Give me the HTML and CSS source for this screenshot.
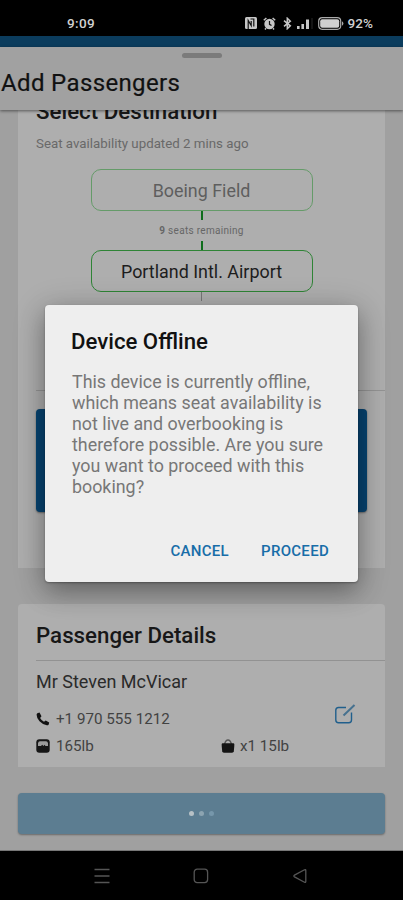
FILE: index.html
```html
<!DOCTYPE html>
<html lang="en">
<head>
<meta charset="utf-8">
<title>Add Passengers</title>
<link rel="stylesheet" href="styles.css">
</head>
<body>
<div class="screen">
  <header class="status">
    <span class="clock">9:09</span>
    <div class="status-icons">
      <svg class="nfc" width="12" height="12" viewBox="0 0 12 12"><rect width="12" height="12" rx="1.5" fill="#c6c6c6"/><path d="M3.200 12V3.500l3 5V4M5.500 2h3.300v7.500" fill="none" stroke="#111" stroke-width="1.200"/></svg>
      <svg class="alarm" width="13" height="13" viewBox="0 0 13 13"><circle cx="6.5" cy="7" r="5.2" fill="#c6c6c6"/><path d="M.8 3.2 3.4 1M12.2 3.2 9.6 1M3 11.3l-1 1.2M10 11.3l1 1.2" stroke="#c6c6c6" stroke-width="1.5"/><path d="M6.5 4v3.3l2 1.2" fill="none" stroke="#111" stroke-width="1.2"/></svg>
      <svg class="bluetooth" width="9" height="13" viewBox="0 0 9 13"><path d="m1 3.7 6.3 5.2-3 2.8V1.3l3 2.8L1 9.3" fill="none" stroke="#c6c6c6" stroke-width="1.5"/></svg>
      <svg class="signal" width="16" height="11" viewBox="0 0 16 11"><path d="M0 8h2.6v3H0zM4.4 6H7v5H4.4zM9 1.500h3V11H9z" fill="#c6c6c6"/><path d="M14.500 0h1v11h-1z" fill="#292929"/></svg>
      <svg class="battery" width="26" height="13" viewBox="0 0 26 13"><rect x=".7" y=".7" width="22" height="11.600" rx="3.500" fill="none" stroke="#aaa" stroke-width="1.200"/><rect x="2.200" y="2.200" width="19" height="8.600" rx="2" fill="#d0d0d0"/><path d="M24 4.200q1.400.8 1.400 2.300T24 8.800z" fill="#aaa"/></svg>
      <span class="percent">92%</span>
    </div>
  </header>
  <div class="appbar"></div>
  <section class="sheet-head">
    <div class="grabber"></div>
    <h1>Add Passengers</h1>
  </section>
  <main class="content">
    <section class="card destination">
      <h2>Select Destination</h2>
      <p class="updated">Seat availability updated 2 mins ago</p>
      <div class="route">
        <div class="stop faded"><span>Boeing Field</span></div>
        <i class="link"></i>
        <p class="seats"><b>9</b> seats remaining</p>
        <i class="link"></i>
        <div class="stop"><span>Portland Intl. Airport</span></div>
        <i class="link muted"></i>
      </div>
      <hr class="rule">
      <div class="panel"></div>
    </section>
    <section class="card passenger">
      <h2>Passenger Details</h2>
      <p class="name">Mr Steven McVicar</p>
      <div class="details">
        <div class="detail phone"><svg width="14" height="14" viewBox="0 0 14 14"><path d="M1.300 1.200 3.500.6 5.500 4.300 4.100 5.900q1.400 2.600 3.900 3.900l1.700-1.400 3.500 2.100-.6 2.200q-.6.700-1.800.6Q6.500 12.500 3.500 9.300.7 6.300.6 2.700.6 1.800 1.300 1.200z" fill="#121212"/></svg><span>+1 970 555 1212</span></div>
        <svg class="edit" width="22" height="22" viewBox="0 0 22 22" fill="none" stroke="#205f8c"><path d="M12 3.500H4.500q-2.700 0-2.700 2.700v9.800q0 2.700 2.700 2.700h10.300q2.700 0 2.700-2.700V8.500" stroke-width="1.400"/><path d="M9.500 11.500 20.500 1" stroke="#46718f" stroke-width="2"/></svg>
        <div class="detail weight"><svg width="14" height="14" viewBox="0 0 14 14"><rect x=".3" y=".3" width="13.400" height="13.400" rx="3" fill="#161616"/><path d="M2 7V4.200Q2.300 2.400 4 2.200h6q1.700.2 2 2V7H9.500L8.500 5.800 7.500 7 6.200 5.800 5 7z" fill="#9b9b9b"/></svg><span>165lb</span></div>
        <div class="detail bag"><svg width="14" height="14" viewBox="0 0 14 14"><path d="M3.500 5.500Q4.500 1 7 1T10.500 5.500" fill="none" stroke="#555" stroke-width="1.300"/><path d="M1.700 4.200h10.600q1 0 1 1.200v1.600l-.5 5.300q-.2 1.400-1.700 1.400H2.900q-1.500 0-1.700-1.400L.7 7V5.400q0-1.200 1-1.200z" fill="#141414"/></svg><span>x1 15lb</span></div>
      </div>
    </section>
    <div class="submit"><i></i><i></i><i></i></div>
  </main>
  <nav class="nav">
    <svg width="16" height="16" viewBox="0 0 16 16" stroke="#555" stroke-width="1.300"><path d="M.5 1.500h15M.5 8h15M.5 14.500h15"/></svg>
    <svg width="16" height="16" viewBox="0 0 16 16"><rect x="1.200" y="1.200" width="13.400" height="13.400" rx="3" fill="none" stroke="#555" stroke-width="1.300"/></svg>
    <svg width="16" height="16" viewBox="0 0 16 16"><path d="M13.800 2.500v11q0 1.300-1.300.7L2.500 8.900q-1.300-.9 0-1.800l10-5.300q1.300-.6 1.300.7z" fill="none" stroke="#555" stroke-width="1.300"/></svg>
  </nav>
  <div class="dialog" role="dialog">
    <h3>Device Offline</h3>
    <p>This device is currently offline,<br>which means seat availability is<br>not live and overbooking is<br>therefore possible. Are you sure<br>you want to proceed with this<br>booking?</p>
    <div class="actions"><button class="cancel">CANCEL</button><button class="proceed">PROCEED</button></div>
  </div>
</div>
</body>
</html>
```
FILE: styles.css
```css
* { box-sizing: border-box; }
body, h1, h2, h3, p { margin: 0; }
body { font-family: Roboto, "Liberation Sans", sans-serif; background: #000; }
svg { display: block; flex: none; }
.screen { position: relative; display: flex; flex-direction: column; width: 403px; height: 900px; overflow: hidden; }
.status { flex: none; height: 36px; background: #000; color: #d0d0d0; display: flex; justify-content: space-between; padding: 10px 30px 0 67px; font: 500 13.500px/26px Roboto, sans-serif; }
.clock { letter-spacing: .4px; }
.status-icons { display: flex; align-items: center; height: 26px; }
.alarm { margin-left: 6px; }
.bluetooth { margin-left: 7px; }
.signal { margin-left: 5px; }
.battery { margin-left: 5px; }
.percent { margin-left: 3px; letter-spacing: .1px; }
.appbar { flex: none; height: 11px; background: #0b3c5d; }
.sheet-head { flex: none; position: relative; z-index: 1; height: 63px; background: #a1a1a1; box-shadow: 0 1px 3px rgba(0,0,0,.5); padding-top: 6px; }
.grabber { width: 40px; height: 5px; border-radius: 3px; background: #7b7b7b; margin: 0 auto; }
h1 { font-weight: 400; font-size: 24px; line-height: 28px; margin: 11px 0 0 1px; letter-spacing: .36px; color: #111; -webkit-text-stroke: .2px #111; }
.content { flex: none; height: 741px; overflow: hidden; background: #a0a0a0; padding: 0 18px; border-bottom: 1px solid #777; }
.card { background: #aeaeae; padding-left: 18px; }
.destination { display: flow-root; height: 458px; }
h2 { font-weight: 500; font-size: 22.300px; line-height: 26px; color: #171717; }
.destination h2 { margin-top: -12px; }
.updated { font-size: 13.300px; line-height: 18px; margin-top: 11px; color: #696969; }
.route { display: flex; flex-direction: column; align-items: center; padding-right: 18px; margin-top: 16px; height: 221px; }
.stop { flex: none; width: 222px; height: 42px; border: 1.500px solid #2f8436; border-radius: 10px; display: flex; align-items: center; justify-content: center; font-size: 17.900px; color: #1d1d1d; }
.stop.faded { border-color: #659b69; color: #5e5e5e; }
.link { flex: none; width: 2px; height: 9px; background: #0f6d1c; }
.link.muted { width: 1px; background: #777; }
.seats { font-size: 10px; line-height: 21px; height: 21px; color: #666; letter-spacing: .3px; }
.rule { border: 0; height: 1px; background: #949494; margin: 0; }
.panel { height: 103px; width: 331px; margin-top: 18px; border-radius: 4px; background: #074471; box-shadow: 0 1px 2px rgba(0,0,0,.4); }
.passenger { height: 163px; margin-top: 36px; padding-top: 18px; border-radius: 4px 4px 0 0; }
.passenger h2 { height: 39px; border-bottom: 1px solid #929292; }
.name { font-size: 18px; line-height: 24px; margin-top: 9px; color: #2a2a2a; }
.details { display: grid; grid-template-columns: 185px 1fr 51px; row-gap: 7px; margin-top: 15px; align-items: center; }
.detail { display: flex; align-items: center; gap: 6px; height: 20px; font-size: 15.200px; color: #424242; }
.phone { grid-column: 1 / 3; }
.bag { gap: 5px; }
.edit { margin-top: -8px; }
.submit { height: 41px; margin-top: 26px; border-radius: 4px; background: #5c7d91; box-shadow: 0 1px 2px rgba(0,0,0,.35); display: flex; align-items: center; justify-content: center; gap: 5px; }
.submit i { width: 5px; height: 5px; border-radius: 50%; background: #b7c1c6; }
.submit i + i { background: #8ca4b1; }
.submit i + i + i { background: #7697ab; }
.nav { flex: none; height: 49px; display: flex; align-items: center; justify-content: center; gap: 83px; padding-right: 2px; background: #000; }
.dialog { position: absolute; z-index: 2; left: 45px; top: 305px; width: 313px; height: 277px; background: #eee; border-radius: 4px; padding: 22px 26px; box-shadow: 0 10px 24px rgba(0,0,0,.26), 0 5px 34px rgba(0,0,0,.2), 0 1px 2px rgba(0,0,0,.3); }
h3 { font-weight: 500; font-size: 22.200px; line-height: 28px; color: #111; }
.dialog p { margin: 16px 0 0 1px; font-size: 17.850px; line-height: 21px; color: #777; white-space: nowrap; }
.actions { display: flex; justify-content: flex-end; gap: 32px; margin-top: 43px; padding-right: 3px; }
button { border: 0; background: none; padding: 0; font: 500 15px/22px Roboto, sans-serif; letter-spacing: .3px; color: #176da8; }
```
